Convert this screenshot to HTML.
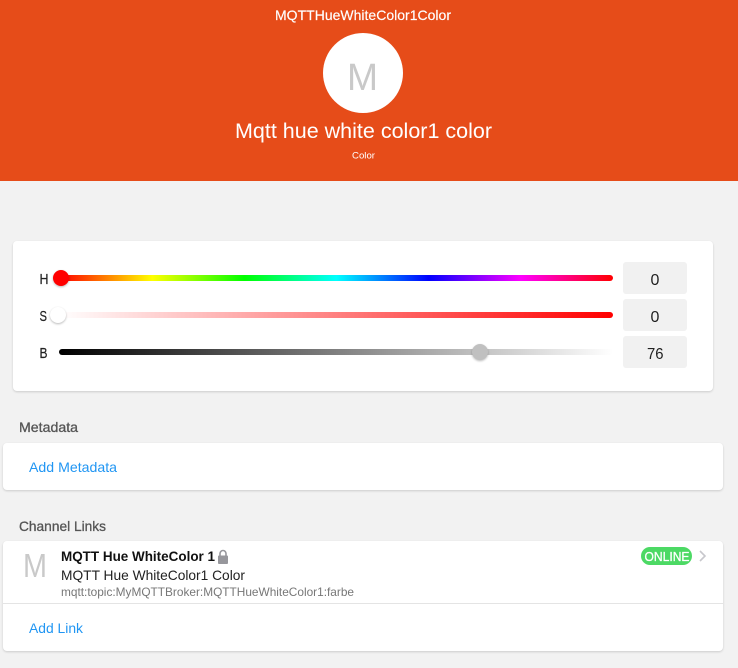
<!DOCTYPE html>
<html lang="en"><head><meta charset="utf-8"><title>MQTTHueWhiteColor1Color</title>
<style>
html,body{margin:0;padding:0;width:738px;height:668px;overflow:hidden;background:#f2f2f2}
.a{position:absolute}
.card{position:absolute;background:#fff;border-radius:4px;box-shadow:0 1px 2px rgba(0,0,0,.16)}
.track{position:absolute;height:6px;border-radius:3px}
.thumb{position:absolute;border-radius:50%;box-shadow:0 1px 2px rgba(0,0,0,.28)}
.box{position:absolute;left:623px;width:64px;height:32px;background:#f1f1f1;border-radius:3px}
svg{position:absolute;left:0;top:0}
text{font-family:"Liberation Sans",sans-serif}
</style></head><body>
<div class="a" style="left:0;top:0;width:738px;height:181px;background:#e64c19"></div>
<div class="a" style="left:323px;top:33px;width:80px;height:80px;border-radius:50%;background:#fff"></div>
<div class="card" style="left:13px;top:241px;width:700px;height:150px"></div>
<div class="track" style="left:60px;top:275px;width:553px;background:linear-gradient(to right,#f00 0%,#ff0 16.67%,#0f0 33.33%,#0ff 50%,#00f 66.67%,#f0f 83.33%,#f00 100%)"></div>
<div class="track" style="left:59px;top:312px;width:554px;background:linear-gradient(to right,#fff,#f00)"></div>
<div class="track" style="left:59px;top:349px;width:554px;background:linear-gradient(to right,#000,#fff)"></div>
<div class="thumb" style="left:53px;top:270px;width:16px;height:16px;background:#f00"></div>
<div class="thumb" style="left:50px;top:307px;width:16px;height:16px;background:#fff"></div>
<div class="thumb" style="left:472px;top:344px;width:16px;height:16px;background:#c0c0c0"></div>
<div class="box" style="top:262px"></div>
<div class="box" style="top:299px"></div>
<div class="box" style="top:336px"></div>
<div class="card" style="left:3px;top:443px;width:720px;height:47px"></div>
<div class="card" style="left:3px;top:541px;width:720px;height:110px"></div>
<div class="a" style="left:3px;top:603px;width:720px;height:1px;background:#e4e4e4"></div>
<div class="a" style="left:641px;top:547px;width:51px;height:18px;border-radius:9px;background:#4cd964"></div>
<svg width="738" height="668" viewBox="0 0 738 668" xmlns="http://www.w3.org/2000/svg">
<text x="275" y="20" font-size="14" fill="#fff" stroke="#fff" stroke-width=".15" textLength="176" lengthAdjust="spacingAndGlyphs">MQTTHueWhiteColor1Color</text>
<text x="347" y="90" font-size="38" fill="#c9c9c9" textLength="31" lengthAdjust="spacingAndGlyphs">M</text>
<text x="235" y="138" font-size="21" fill="#fff" textLength="257" lengthAdjust="spacingAndGlyphs">Mqtt hue white color1 color</text>
<text x="352" y="158.5" font-size="9.5" fill="#fff" textLength="23" lengthAdjust="spacingAndGlyphs">Color</text>
<text x="39.5" y="284" font-size="15" fill="#222" stroke="#222" stroke-width=".2" textLength="9" lengthAdjust="spacingAndGlyphs">H</text>
<text x="39.5" y="321" font-size="15" fill="#222" stroke="#222" stroke-width=".2" textLength="7.5" lengthAdjust="spacingAndGlyphs">S</text>
<text x="39.5" y="358" font-size="15" fill="#222" stroke="#222" stroke-width=".2" textLength="8" lengthAdjust="spacingAndGlyphs">B</text>
<text x="655" y="285" font-size="16" fill="#222" text-anchor="middle">0</text>
<text x="655" y="322" font-size="16" fill="#222" text-anchor="middle">0</text>
<text x="647" y="359" font-size="16" fill="#222" textLength="16.5" lengthAdjust="spacingAndGlyphs">76</text>
<text x="19" y="432" font-size="14" fill="#555" stroke="#555" stroke-width=".3" textLength="59" lengthAdjust="spacingAndGlyphs">Metadata</text>
<text x="29" y="472" font-size="14" fill="#2196f3" textLength="88" lengthAdjust="spacingAndGlyphs">Add Metadata</text>
<text x="19" y="531" font-size="14" fill="#555" stroke="#555" stroke-width=".3" textLength="87" lengthAdjust="spacingAndGlyphs">Channel Links</text>
<text x="23" y="577" font-size="33" fill="#c9c9c9" textLength="24" lengthAdjust="spacingAndGlyphs">M</text>
<text x="61" y="561" font-size="14" font-weight="700" fill="#111" textLength="154" lengthAdjust="spacingAndGlyphs">MQTT Hue WhiteColor 1</text>
<path d="M220 556.5v-3a3 3 0 0 1 6 0v3" fill="none" stroke="#97979c" stroke-width="1.6"/>
<rect x="218" y="555.5" width="10" height="8.5" rx="1" fill="#97979c"/>
<text x="61" y="580" font-size="14" fill="#222" textLength="184" lengthAdjust="spacingAndGlyphs">MQTT Hue WhiteColor1 Color</text>
<text x="61" y="596" font-size="12" fill="#777" textLength="293" lengthAdjust="spacingAndGlyphs">mqtt:topic:MyMQTTBroker:MQTTHueWhiteColor1:farbe</text>
<text x="644.5" y="561" font-size="13" fill="#fff" stroke="#fff" stroke-width=".3" textLength="45" lengthAdjust="spacingAndGlyphs">ONLINE</text>
<path d="M700 551l5 5-5 5" fill="none" stroke="#c7c7cc" stroke-width="1.6"/>
<text x="29" y="633" font-size="14" fill="#2196f3" textLength="54" lengthAdjust="spacingAndGlyphs">Add Link</text>
</svg>
</body></html>
